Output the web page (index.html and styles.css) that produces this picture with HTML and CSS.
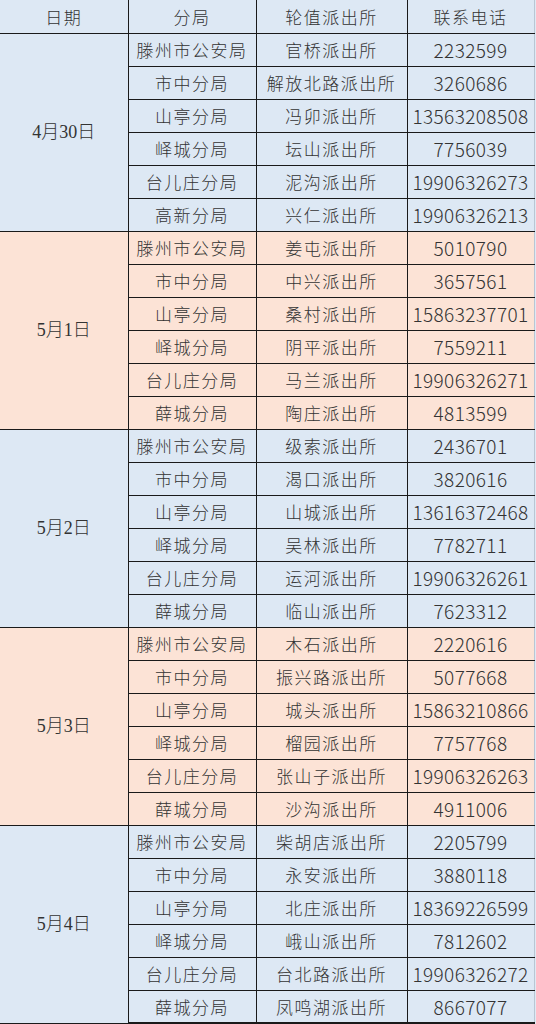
FILE: index.html
```html
<!DOCTYPE html>
<html lang="zh-CN">
<head>
<meta charset="utf-8">
<link rel="stylesheet" href="styles.css">
</head>
<body>
<table class="duty">
<colgroup><col class="c1"><col class="c2"><col class="c3"><col class="c4"></colgroup>
<thead>
<tr class="blue"><th>日期</th><th>分局</th><th>轮值派出所</th><th>联系电话</th></tr>
</thead>
<tbody class="blue">
<tr><td class="date" rowspan="6">4月30日</td><td>滕州市公安局</td><td>官桥派出所</td><td class="tel">2232599</td></tr>
<tr><td>市中分局</td><td>解放北路派出所</td><td class="tel">3260686</td></tr>
<tr><td>山亭分局</td><td>冯卯派出所</td><td class="tel">13563208508</td></tr>
<tr><td>峄城分局</td><td>坛山派出所</td><td class="tel">7756039</td></tr>
<tr><td>台儿庄分局</td><td>泥沟派出所</td><td class="tel">19906326273</td></tr>
<tr><td>高新分局</td><td>兴仁派出所</td><td class="tel">19906326213</td></tr>
</tbody>
<tbody class="pink">
<tr><td class="date" rowspan="6">5月1日</td><td>滕州市公安局</td><td>姜屯派出所</td><td class="tel">5010790</td></tr>
<tr><td>市中分局</td><td>中兴派出所</td><td class="tel">3657561</td></tr>
<tr><td>山亭分局</td><td>桑村派出所</td><td class="tel">15863237701</td></tr>
<tr><td>峄城分局</td><td>阴平派出所</td><td class="tel">7559211</td></tr>
<tr><td>台儿庄分局</td><td>马兰派出所</td><td class="tel">19906326271</td></tr>
<tr><td>薛城分局</td><td>陶庄派出所</td><td class="tel">4813599</td></tr>
</tbody>
<tbody class="blue">
<tr><td class="date" rowspan="6">5月2日</td><td>滕州市公安局</td><td>级索派出所</td><td class="tel">2436701</td></tr>
<tr><td>市中分局</td><td>渴口派出所</td><td class="tel">3820616</td></tr>
<tr><td>山亭分局</td><td>山城派出所</td><td class="tel">13616372468</td></tr>
<tr><td>峄城分局</td><td>吴林派出所</td><td class="tel">7782711</td></tr>
<tr><td>台儿庄分局</td><td>运河派出所</td><td class="tel">19906326261</td></tr>
<tr><td>薛城分局</td><td>临山派出所</td><td class="tel">7623312</td></tr>
</tbody>
<tbody class="pink">
<tr><td class="date" rowspan="6">5月3日</td><td>滕州市公安局</td><td>木石派出所</td><td class="tel">2220616</td></tr>
<tr><td>市中分局</td><td>振兴路派出所</td><td class="tel">5077668</td></tr>
<tr><td>山亭分局</td><td>城头派出所</td><td class="tel">15863210866</td></tr>
<tr><td>峄城分局</td><td>榴园派出所</td><td class="tel">7757768</td></tr>
<tr><td>台儿庄分局</td><td>张山子派出所</td><td class="tel">19906326263</td></tr>
<tr><td>薛城分局</td><td>沙沟派出所</td><td class="tel">4911006</td></tr>
</tbody>
<tbody class="blue">
<tr><td class="date" rowspan="6">5月4日</td><td>滕州市公安局</td><td>柴胡店派出所</td><td class="tel">2205799</td></tr>
<tr><td>市中分局</td><td>永安派出所</td><td class="tel">3880118</td></tr>
<tr><td>山亭分局</td><td>北庄派出所</td><td class="tel">18369226599</td></tr>
<tr><td>峄城分局</td><td>峨山派出所</td><td class="tel">7812602</td></tr>
<tr><td>台儿庄分局</td><td>台北路派出所</td><td class="tel">19906326272</td></tr>
<tr><td>薛城分局</td><td>凤鸣湖派出所</td><td class="tel">8667077</td></tr>
</tbody>
</table>
</body>
</html>
```

FILE: styles.css
```css
html, body {
  margin: 0;
  padding: 0;
  background: #dfe9f4;
}
.duty {
  border-collapse: collapse;
  table-layout: fixed;
  width: 534px;
  font-family: "Noto Sans CJK SC", "Noto Sans", sans-serif;
  font-size: 17px;
  color: #333;
}
.c1 { width: 128px; }
.c2 { width: 128px; }
.c3 { width: 151px; }
.c4 { width: 127px; }
.duty tr { height: 33px; }
.duty th, .duty td {
  border: 1px solid #1a1a1a;
  padding: 0;
  text-align: center;
  vertical-align: middle;
  font-weight: 300;
  line-height: 1;
  letter-spacing: 1.5px;
  white-space: nowrap;
}
.duty thead th { border-top: none; }
.duty th:first-child, .duty td.date { border-left: none; }
.duty th:last-child, .duty td.tel { border-right: 1px solid #b9c6d3; }
.duty tbody:last-child tr:last-child td { border-bottom: 2px solid #1a1a1a; }
.blue { background: #dde8f4; }
.pink { background: #fce3d6; }
.duty .tel {
  font-family: "Noto Sans CJK SC", "Noto Sans", sans-serif;
  font-size: 19px;
  font-weight: 300;
  letter-spacing: 0.4px;
}
.duty .date {
  font-family: "Liberation Serif", "Noto Sans CJK SC", serif;
  font-size: 18px;
  letter-spacing: 0;
}
```
